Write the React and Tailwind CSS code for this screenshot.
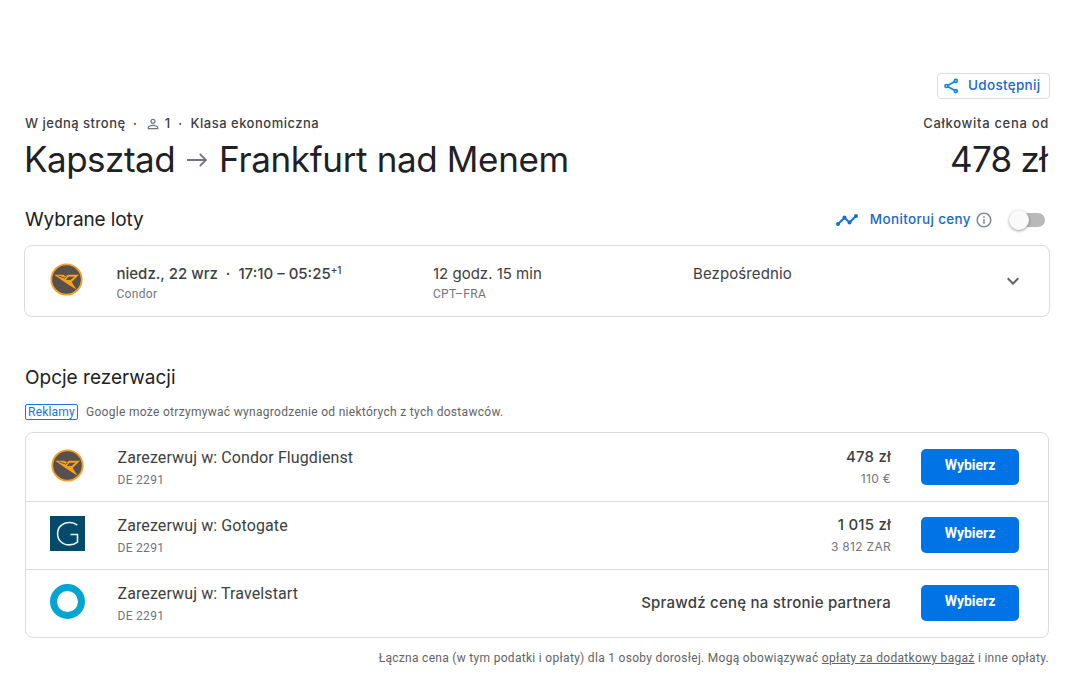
import clsx from "clsx";
import { MdExpandMore, MdInfoOutline, MdPersonOutline } from "react-icons/md";

const CondorLogo = () => (
  <svg viewBox="0 0 34 34" className="size-[34px]">
    <circle cx="16.500" cy="16.500" r="15.200" fill="#57504e" stroke="#f3a12c" strokeWidth="1.800" />
    <path
      d="M4.200 11.800H13.500L15.300 13.200 18.300 11.800H29L21.700 18.900 26.500 26.800 15.500 19.800ZM18.300 13.800L15.700 17H20.600L24.500 13.800Z"
      fill="#f9a11b"
      fillRule="evenodd"
    />
    <path d="M8.500 12.900L14.800 15.200 16.500 13.400" fill="none" stroke="#57504e" strokeWidth="0.900" />
  </svg>
);

const GotogateLogo = () => (
  <svg viewBox="0 0 35 35" className="size-[35px]">
    <rect width="35" height="35" fill="#034a6c" />
    <path d="M27.200 9.200C25.200 7.400 22.800 6.500 19.500 6.500 12.600 6.500 7.600 11.200 7.600 17.700S12.400 28.900 19.300 28.900c3.200 0 6.100-1 8.200-2.700v-7.700h-7" fill="none" stroke="#e8f3f6" strokeWidth="1.600" />
  </svg>
);

const TravelstartLogo = () => (
  <svg viewBox="0 0 35 35" className="size-[35px]">
    <circle cx="17.500" cy="17.500" r="14" fill="none" stroke="#00a5d2" strokeWidth="7" />
  </svg>
);

const ShareIcon = () => (
  <svg viewBox="0 0 16 16" className="size-4" fill="none" stroke="#0b86e0" strokeWidth="1.700">
    <path d="M4 7.200l7-3.700M4 8.800l7 3.700" />
    <circle cx="2.500" cy="8" r="1.500" />
    <circle cx="11.800" cy="2.900" r="1.500" />
    <circle cx="11.800" cy="13.100" r="1.500" />
  </svg>
);

const TrendIcon = () => (
  <svg viewBox="0 0 22 12" className="h-3 w-[22px]" fill="#0b6fdc">
    <path d="M2 10l6.500-6.200 5 4.600L20 2" fill="none" stroke="#0b6fdc" strokeWidth="2" />
    <circle cx="2" cy="10" r="2" />
    <circle cx="8.500" cy="3.600" r="2" />
    <circle cx="13.500" cy="8.400" r="2" />
    <circle cx="20" cy="2" r="2" />
  </svg>
);

const ArrowIcon = () => (
  <svg viewBox="0 0 20 14" className="mt-0.5 mr-3 ml-3 h-3.5 w-5" fill="none" stroke="#70757a" strokeWidth="1.800">
    <path d="M0 7h19M12.800 0.800L19 7l-6.200 6.200" />
  </svg>
);

const options = [
  { name: "Condor Flugdienst", flight: "DE 2291", price: "478 zł", local: "110 €", logo: CondorLogo },
  { name: "Gotogate", flight: "DE 2291", price: "1 015 zł", local: "3 812 ZAR", logo: GotogateLogo },
  { name: "Travelstart", flight: "DE 2291", price: null, local: null, logo: TravelstartLogo },
];

function OptionRow({ option, first }) {
  const Logo = option.logo;
  return (
    <div className={clsx("flex h-[68px] items-start border-[#dadce0] pr-[29px] pl-6", first ? "pt-4" : "border-t pt-[15px]")}>
      <div className={clsx("flex w-[35px] shrink-0 justify-center", first ? "" : "-mt-px")}>
        <Logo />
      </div>
      <div className="ml-[32.500px] flex-1">
        <p className="-mt-px text-[16px] leading-5 tracking-[0.1px] text-[#3c4043]">Zarezerwuj w: {option.name}</p>
        <p className="mt-1 text-[12px] leading-4 tracking-[0.3px] text-[#70757a]">{option.flight}</p>
      </div>
      <div className="text-right font-['Inter',sans-serif]">
        {option.price ? (
          <>
            <p className="-mt-0.5 text-[15px] leading-5 font-medium tracking-[0.2px] text-[#3c4043]">{option.price}</p>
            <p className="mt-1 text-[12px] leading-4 tracking-[0.3px] text-[#70757a]">{option.local}</p>
          </>
        ) : (
          <p className="mt-2 text-[15px] leading-5 font-medium tracking-[0.230px] text-[#3c4043]">Sprawdź cenę na stronie partnera</p>
        )}
      </div>
      <button className="ml-[30px] h-9 w-[98px] rounded-[5px] bg-[#0073e6] pb-1 text-[14px] font-bold text-white">Wybierz</button>
    </div>
  );
}

export default function App() {
  return (
    <div className="h-[679px] overflow-hidden bg-white pt-[73px] pr-[23px] pl-6 font-['Roboto',sans-serif] text-[#202124]">
      <div className="flex justify-end">
        <button className="flex h-[26px] w-[113px] items-center rounded border border-[#dadce0] pl-1.5 font-['Inter',sans-serif] text-[13.500px] font-medium tracking-[0.3px] text-[#1967d2]">
          <ShareIcon />
          <span className="ml-2 pb-0.5 whitespace-nowrap">Udostępnij</span>
        </button>
      </div>

      {/* Trip summary */}
      <div className="mt-[15px] flex h-5 items-center justify-between pr-px pl-px font-['Inter',sans-serif] text-[13px] font-medium tracking-[0.5px] text-[#3c4043]">
        <div className="flex items-center">
          <span>W jedną stronę</span>
          <span className="w-[19px] text-center">·</span>
          <MdPersonOutline className="size-4 text-[#70757a]" />
          <span className="ml-1">1</span>
          <span className="w-5 text-center">·</span>
          <span>Klasa ekonomiczna</span>
        </div>
        <span className="tracking-[0.7px]">Całkowita cena od</span>
      </div>
      <div className="mt-[3px] flex h-11 items-center justify-between pr-[3px] font-['Inter',sans-serif] text-[35px]">
        <h1 className="flex items-center tracking-[-0.350px]">
          <span className="tracking-[-0.5px]">Kapsztad</span>
          <ArrowIcon />
          <span>Frankfurt nad Menem</span>
        </h1>
        <span className="tracking-[-0.7px]">478 zł</span>
      </div>

      {/* Selected flights */}
      <div className="mt-[25px] flex h-7 items-center justify-between font-['Inter',sans-serif]">
        <h2 className="pl-px text-[19px] tracking-[-0.1px]">Wybrane loty</h2>
        <div className="flex items-center pr-[5px]">
          <TrendIcon />
          <span className="ml-3 pb-px text-[13.500px] font-medium tracking-[0.350px] text-[#1967d2]">Monitoruj ceny</span>
          <MdInfoOutline className="ml-1 size-[18px] text-[#80868b]" />
          <div className="ml-4 flex w-9 items-center">
            <div className="z-10 size-5 shrink-0 rounded-full bg-[#fafafa] shadow-[0_1px_3px_rgba(0,0,0,0.4)]" />
            <div className="-ml-4 h-3.5 w-8 shrink-0 rounded-full bg-[#b9b9b9]" />
          </div>
        </div>
      </div>
      <div className="mt-[11px] flex h-[72px] items-center rounded-lg border border-[#dadce0] pr-6 pl-[25px]">
        <div className="-mt-0.5">
          <CondorLogo />
        </div>
        <div className="ml-[32.500px] w-[316.500px] pt-1.5">
          <p className="h-5 font-['Inter',sans-serif] text-[15px] leading-5 font-medium whitespace-nowrap text-[#3c4043]">
            niedz., 22 wrz <span className="mx-1">·</span> 17:10 – 05:25<sup className="text-[10px]">+1</sup>
          </p>
          <p className="text-[12px] leading-5 tracking-[0.3px] text-[#70757a]">Condor</p>
        </div>
        <div className="w-[260px] pt-1.5">
          <p className="font-['Inter',sans-serif] text-[15px] leading-5 text-[#3c4043]">12 godz. 15 min</p>
          <p className="text-[12px] leading-5 tracking-[0.3px] text-[#70757a]">CPT–FRA</p>
        </div>
        <p className="flex-1 pb-3.5 font-['Inter',sans-serif] text-[15px] leading-5 tracking-[0.1px] text-[#3c4043]">Bezpośrednio</p>
        <MdExpandMore className="size-6 text-[#5f6368]" />
      </div>

      {/* Booking options */}
      <h2 className="mt-[47px] pl-px font-['Inter',sans-serif] text-[19px] leading-7">Opcje rezerwacji</h2>
      <div className="mt-[11px] flex h-[18px] items-center pl-px text-[12px] tracking-[0.3px] text-[#5f6368]">
        <span className="flex h-4 w-[53px] items-center justify-center rounded-xs border border-[#1a73e8] tracking-[0.2px] text-[#1a73e8]">Reklamy</span>
        <span className="ml-2">Google może otrzymywać wynagrodzenie od niektórych z tych dostawców.</span>
      </div>
      <div className="mt-[11px] mr-px ml-px rounded-lg border border-[#dadce0]">
        {options.map((option, i) => (
          <OptionRow key={option.name} option={option} first={i === 0} />
        ))}
      </div>
      <p className="mt-3 pr-px text-right text-[12px] leading-4 tracking-[0.3px] text-[#5f6368]">
        Łączna cena (w tym podatki i opłaty) dla 1 osoby dorosłej. Mogą obowiązywać{" "}
        <a href="#" className="underline">opłaty za dodatkowy bagaż</a> i inne opłaty.
      </p>
    </div>
  );
}
